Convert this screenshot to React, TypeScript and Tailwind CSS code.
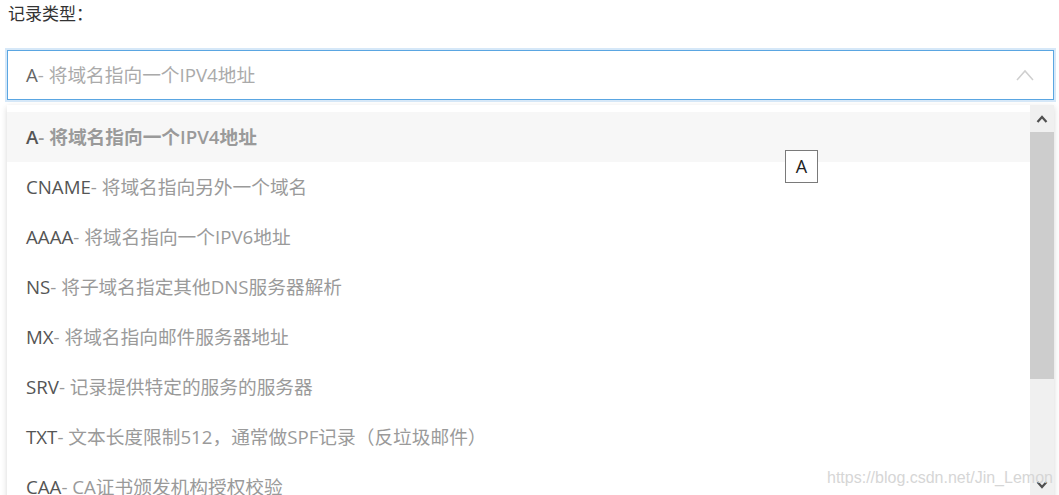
import React from "react";

const items: [string, string][] = [
  ["A", "- 将域名指向一个IPV4地址"],
  ["CNAME", "- 将域名指向另外一个域名"],
  ["AAAA", "- 将域名指向一个IPV6地址"],
  ["NS", "- 将子域名指定其他DNS服务器解析"],
  ["MX", "- 将域名指向邮件服务器地址"],
  ["SRV", "- 记录提供特定的服务的服务器"],
  ["TXT", "- 文本长度限制512，通常做SPF记录（反垃圾邮件）"],
  ["CAA", "- CA证书颁发机构授权校验"],
];

const font = { fontFamily: '"Open Sans", "Noto Sans CJK SC", sans-serif' };

export default function App() {
  return (
    <div
      className="relative w-[1059px] h-[495px] overflow-hidden bg-white pl-[7px] pr-[5px]"
      style={font}
    >
      <div className="h-[28px] leading-[28px] text-[17px] text-[#333] pl-[1px]">记录类型：</div>

      <div className="mt-[22px] h-[50px] border border-[#5aa6e2] shadow-[0_0_0_2px_#d6e8f8] flex items-center pl-[18px] pr-[18px]">
        <span className="text-[18.7px] text-[#666]">A</span>
        <span className="text-[18.7px] text-[#aaa]">- 将域名指向一个IPV4地址</span>
        <div className="flex-1" />
        <svg width="18" height="12" viewBox="0 0 18 12" className="mr-[1px]">
          <polyline points="1,11 9,2 17,11" fill="none" stroke="#cfcfcf" strokeWidth="1.5" />
        </svg>
      </div>

      <div className="mt-[5px] h-[400px] flex bg-white shadow-[0_2px_6px_rgba(0,0,0,0.16)]">
        <div className="flex-1 pt-[7px]">
          {items.map(([k, v], i) => (
            <div
              key={k}
              className={`h-[50px] flex items-center pl-[19px] text-[18.7px] ${
                i === 0 ? "bg-[#f7f7f7] font-semibold" : ""
              }`}
            >
              <span className="text-[#555]">{k}</span>
              <span className="text-[#9a9a9a]">{v}</span>
            </div>
          ))}
        </div>
        <div className="w-[24px] bg-[#f0f0f0] flex flex-col">
          <div className="h-[27px] flex items-center justify-center">
            <svg width="12" height="8" viewBox="0 0 12 8">
              <polyline points="1.5,7 6,2 10.5,7" fill="none" stroke="#505050" strokeWidth="2.2" />
            </svg>
          </div>
          <div className="h-[247px] bg-[#cdcdcd]" />
          <div className="h-[96px]" />
          <div className="h-[20px] flex items-center justify-center">
            <svg width="12" height="8" viewBox="0 0 12 8">
              <polyline points="1.5,1 6,6 10.5,1" fill="none" stroke="#505050" strokeWidth="2.2" />
            </svg>
          </div>
        </div>
      </div>

      <div className="absolute left-[785px] top-[150px] w-[33px] h-[33px] border border-[#7a7a7a] bg-white flex items-center justify-center text-[18px] text-[#222]">
        A
      </div>

      <div
        className="absolute left-[827px] top-[466px] text-[16px] text-[#d6d6d6] whitespace-nowrap"
        style={{ fontFamily: '"Liberation Sans", Arial, sans-serif' }}
      >
        https://blog.csdn.net/Jin_Lemon
      </div>
    </div>
  );
}
